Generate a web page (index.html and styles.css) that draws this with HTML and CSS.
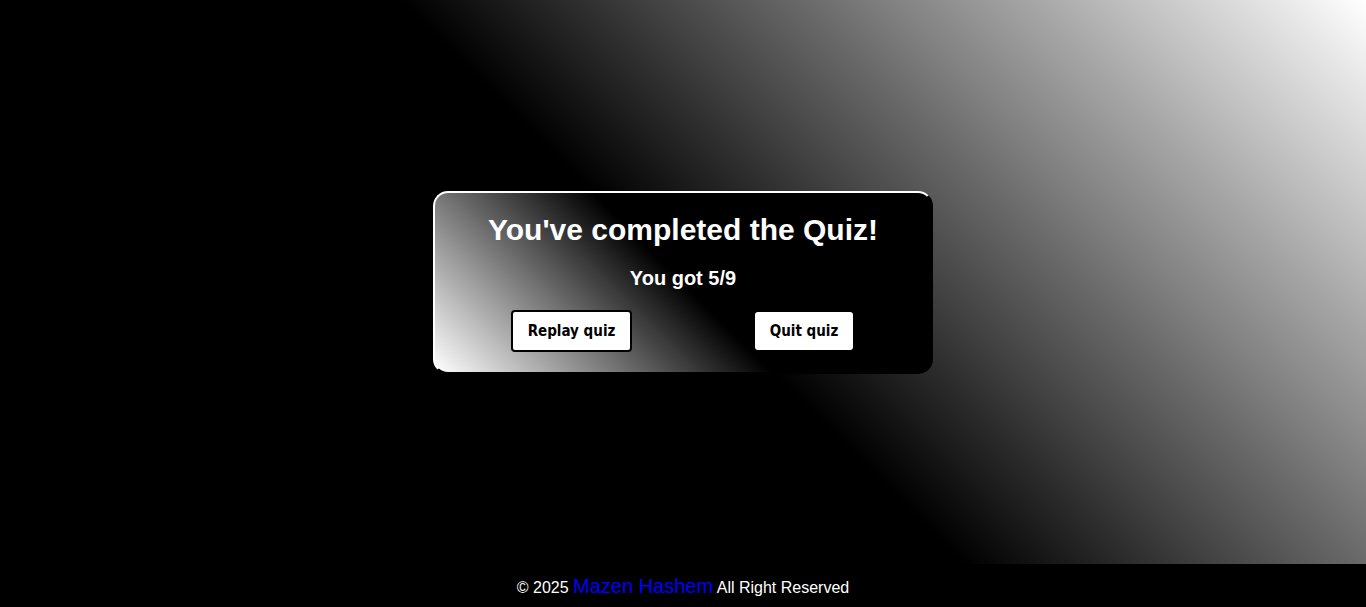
FILE: index.html
```html
<!DOCTYPE html>
<html lang="en">
<head>
<meta charset="utf-8">
<title>Quiz complete</title>
<link rel="stylesheet" href="styles.css">
</head>
<body>
  <main class="stage">
    <section class="result-card">
      <h1 class="result-title">You've completed the Quiz!</h1>
      <p class="result-score">You got 5/9</p>
      <div class="result-actions">
        <button class="btn btn-replay" type="button">Replay quiz</button>
        <button class="btn btn-quit" type="button">Quit quiz</button>
      </div>
    </section>
  </main>
  <footer class="site-footer">
    <span>© 2025 <span class="author">Mazen Hashem</span> All Right Reserved</span>
  </footer>
</body>
</html>
```

FILE: styles.css
```css
html, body {
  margin: 0;
  padding: 0;
}

body {
  height: 607px;
  display: flex;
  flex-direction: column;
  background: #000;
  font-family: "Liberation Sans", Arial, sans-serif;
  color: #fff;
}

.stage {
  height: 564px;
  display: flex;
  align-items: center;
  justify-content: center;
  background: linear-gradient(45deg, #000 50%, #fff 100%);
}

.result-card {
  box-sizing: border-box;
  width: 500px;
  height: 183px;
  padding: 20px 0 0;
  border: 2px solid;
  border-color: #fff #000 #000 #fff;
  border-radius: 15px;
  background: linear-gradient(45deg, #fff 0%, #000 50%);
  text-align: center;
}

.result-title {
  margin: 0;
  font-size: 30px;
  line-height: 34px;
  font-weight: bold;
}

.result-score {
  margin: 20px 0 0;
  font-size: 20px;
  line-height: 23px;
  font-weight: bold;
}

.result-actions {
  margin-top: 20px;
  padding-right: 2px;
  display: flex;
  justify-content: center;
  align-items: center;
  gap: 123px;
}

.btn {
  font-family: "DejaVu Sans Condensed", "DejaVu Sans", sans-serif;
  font-stretch: condensed;
  font-weight: bold;
  font-size: 15px;
  color: #000;
  background: #fff;
  cursor: pointer;
}

.btn-replay {
  width: 121px;
  height: 42px;
  border: 2px solid #000;
  border-radius: 4px;
}

.btn-quit {
  width: 98px;
  height: 38px;
  border: none;
  border-radius: 3px;
}

.site-footer {
  flex: 1;
  display: flex;
  align-items: center;
  justify-content: center;
  padding-top: 2px;
  font-size: 16px;
  color: #fff;
}

.author {
  color: #00f;
  font-size: 20px;
}
```
